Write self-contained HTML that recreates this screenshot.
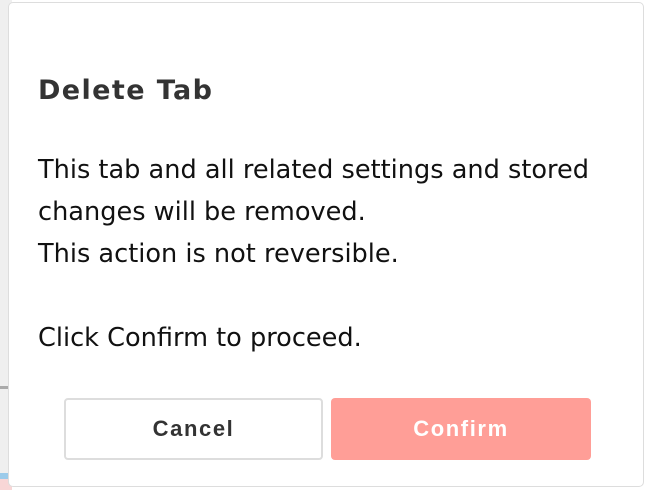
<!DOCTYPE html>
<html><head><style>
html,body{margin:0;padding:0;width:648px;height:490px;overflow:hidden;background:#fff;font-family:"DejaVu Sans","Liberation Sans",sans-serif;}
.bg{position:absolute;left:0;top:0;width:12px;height:490px;background:#efefef;}
.line{position:absolute;left:0;top:386px;width:12px;height:3px;background:#aaa;}
.blue{position:absolute;left:0;top:473px;width:12px;height:6px;background:#9ccbea;}
.pink{position:absolute;left:0;top:479px;width:12px;height:11px;background:#f8d6d6;}
.dlg{position:absolute;left:8px;top:2px;width:636px;height:485px;background:#fff;border:1px solid #ddd;border-radius:5px;box-sizing:border-box;}
h1{position:absolute;left:38px;top:72px;margin:0;font-size:27px;font-weight:bold;color:#333;line-height:38px;letter-spacing:1.4px;}
.body{position:absolute;left:38px;top:149px;font-size:25.6px;line-height:42px;color:#111;white-space:nowrap;}
.btn{position:absolute;top:398px;height:62px;border-radius:4px;box-sizing:border-box;font-weight:bold;font-size:22px;letter-spacing:1.6px;display:flex;align-items:center;justify-content:center;font-family:"Liberation Sans",sans-serif;}
.c{left:64px;width:259px;border:2px solid #ddd;color:#333;background:#fff;}
.k{left:331px;width:260px;background:#ff9e97;color:#fff;}
</style></head><body>
<div class="bg"></div><div class="line"></div><div class="blue"></div><div class="pink"></div>
<div class="dlg"></div>
<h1>Delete Tab</h1>
<div class="body">This tab and all related settings and stored<br>changes will be removed.<br>This action is not reversible.<br><br>Click Confirm to proceed.</div>
<div class="btn c">Cancel</div>
<div class="btn k">Confirm</div>
</body></html>
